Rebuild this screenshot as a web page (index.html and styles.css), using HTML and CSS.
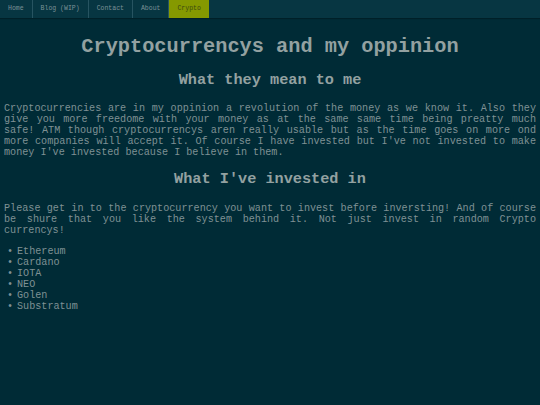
FILE: index.html
```html
<!DOCTYPE html>
<html lang="en">
<head>
<meta charset="utf-8">
<title>Crypto</title>
<link rel="stylesheet" href="styles.css">
</head>
<body>
<nav class="topnav">
  <a class="nav-item" href="#">Home</a>
  <a class="nav-item" href="#">Blog (WIP)</a>
  <a class="nav-item" href="#">Contact</a>
  <a class="nav-item" href="#">About</a>
  <a class="nav-item active" href="#">Crypto</a>
</nav>
<main class="content">
  <h1 class="title">Cryptocurrencys and my oppinion</h1>
  <h2 class="subtitle">What they mean to me</h2>
  <p class="text">Cryptocurrencies are in my oppinion a revolution of the money as we know it. Also they give you more freedome with your money as at the same same time being preatty much safe! ATM though cryptocurrencys aren really usable but as the time goes on more ond more companies will accept it. Of course I have invested but I've not invested to make money I've invested because I believe in them.</p>
  <h2 class="subtitle">What I've invested in</h2>
  <p class="text">Please get in to the cryptocurrency you want to invest before inversting! And of course be shure that you like the system behind it. Not just invest in random Crypto currencys!</p>
  <ul class="coins">
    <li>Ethereum</li>
    <li>Cardano</li>
    <li>IOTA</li>
    <li>NEO</li>
    <li>Golen</li>
    <li>Substratum</li>
  </ul>
</main>
</body>
</html>
```

FILE: styles.css
```css
html, body {
  margin: 0;
  padding: 0;
  background: #002b36;
  height: 100%;
}
body {
  font-family: "Liberation Mono", "Courier New", monospace;
  font-size: 10.15px;
  color: #7f9194;
}
.topnav {
  display: flex;
  height: 18px;
  background: #073642;
  box-shadow: 0 1px 1px rgba(0, 0, 0, 0.25);
}
.nav-item {
  display: block;
  font-size: 6.5px;
  line-height: 18px;
  padding: 0 8px;
  color: #7b9197;
  text-decoration: none;
  border-right: 1px solid #275461;
}
.nav-item.active {
  background: #859900;
  color: #3c4a10;
  border-right: none;
  padding: 0 8px;
}
.content {
  padding: 0 4px;
}
.title {
  font-size: 2em;
  text-align: center;
  color: #93a1a1;
  margin: 16.5px 0 13px;
}
.subtitle {
  font-size: 1.5em;
  text-align: center;
  color: #93a1a1;
  margin: 12.6px 0 14.3px;
}
.text {
  text-align: justify;
  margin: 10.15px 0;
}
.coins {
  list-style: none;
  margin: 9.5px 0;
  padding: 0;
}
.coins li::before {
  content: "•";
  display: inline-block;
  width: 10px;
  padding-left: 3px;
}
```
